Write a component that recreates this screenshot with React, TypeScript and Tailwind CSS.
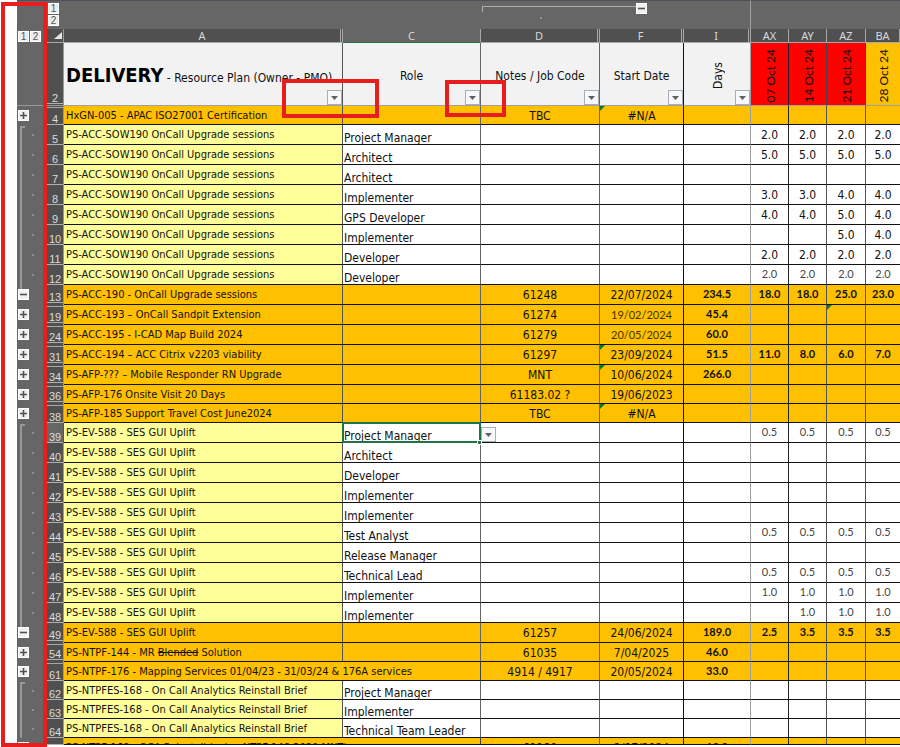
import React from "react";

type Outline = "plus" | "minus" | "first" | "mid" | "cut";
type Row = {
  n: string;
  level: Outline;
  kind: "sum" | "item";
  name: React.ReactNode;
  role?: string;
  code?: string;
  date?: string;
  lightDate?: boolean;
  days?: string;
  weeks?: string[];
  light?: boolean;
  flag?: "date" | "az";
  h?: "short" | "cut";
  gapAfter?: boolean;
  gapBefore?: boolean;
  wide?: boolean;
  selected?: boolean;
};

const SOW = "PS-ACC-SOW190 OnCall Upgrade sessions";
const EV = "PS-EV-588 - SES GUI Uplift";
const BRIEF = "PS-NTPFES-168 - On Call Analytics Reinstall Brief";

const rows: Row[] = [
  { n: "4", level: "plus", kind: "sum", name: "HxGN-005 - APAC ISO27001 Certification", code: "TBC", date: "#N/A", flag: "date", h: "short", gapBefore: true },
  { n: "5", level: "first", kind: "item", name: SOW, role: "Project Manager", weeks: ["2.0", "2.0", "2.0", "2.0"] },
  { n: "6", level: "mid", kind: "item", name: SOW, role: "Architect", weeks: ["5.0", "5.0", "5.0", "5.0"] },
  { n: "7", level: "mid", kind: "item", name: SOW, role: "Architect" },
  { n: "8", level: "mid", kind: "item", name: SOW, role: "Implementer", weeks: ["3.0", "3.0", "4.0", "4.0"] },
  { n: "9", level: "mid", kind: "item", name: SOW, role: "GPS Developer", weeks: ["4.0", "4.0", "5.0", "4.0"] },
  { n: "10", level: "mid", kind: "item", name: SOW, role: "Implementer", weeks: ["", "", "5.0", "4.0"] },
  { n: "11", level: "mid", kind: "item", name: SOW, role: "Developer", weeks: ["2.0", "2.0", "2.0", "2.0"] },
  { n: "12", level: "mid", kind: "item", name: SOW, role: "Developer", weeks: ["2.0", "2.0", "2.0", "2.0"], light: true },
  { n: "13", level: "minus", kind: "sum", name: "PS-ACC-190 - OnCall Upgrade sessions", code: "61248", date: "22/07/2024", days: "234.5", weeks: ["18.0", "18.0", "25.0", "23.0"], gapAfter: true },
  { n: "19", level: "plus", kind: "sum", name: "PS-ACC-193 – OnCall Sandpit Extension", code: "61274", date: "19/02/2024", lightDate: true, days: "45.4", flag: "az", gapBefore: true, gapAfter: true },
  { n: "24", level: "plus", kind: "sum", name: "PS-ACC-195 - I-CAD Map Build 2024", code: "61279", date: "20/05/2024", lightDate: true, days: "60.0", gapBefore: true, gapAfter: true },
  { n: "31", level: "plus", kind: "sum", name: "PS-ACC-194 – ACC Citrix v2203 viability", code: "61297", date: "23/09/2024", days: "51.5", weeks: ["11.0", "8.0", "6.0", "7.0"], flag: "date", gapBefore: true, gapAfter: true },
  { n: "34", level: "plus", kind: "sum", name: "PS-AFP-??? – Mobile Responder RN Upgrade", code: "MNT", date: "10/06/2024", days: "266.0", flag: "date", gapBefore: true, gapAfter: true },
  { n: "36", level: "plus", kind: "sum", name: "PS-AFP-176 Onsite Visit 20 Days", code: "61183.02 ?", date: "19/06/2023", h: "short", gapBefore: true, gapAfter: true },
  { n: "38", level: "plus", kind: "sum", name: "PS-AFP-185 Support Travel Cost June2024", code: "TBC", date: "#N/A", flag: "date", h: "short", gapBefore: true },
  { n: "39", level: "first", kind: "item", name: EV, role: "Project Manager", weeks: ["0.5", "0.5", "0.5", "0.5"], light: true, selected: true },
  { n: "40", level: "mid", kind: "item", name: EV, role: "Architect" },
  { n: "41", level: "mid", kind: "item", name: EV, role: "Developer" },
  { n: "42", level: "mid", kind: "item", name: EV, role: "Implementer" },
  { n: "43", level: "mid", kind: "item", name: EV, role: "Implementer" },
  { n: "44", level: "mid", kind: "item", name: EV, role: "Test Analyst", weeks: ["0.5", "0.5", "0.5", "0.5"], light: true },
  { n: "45", level: "mid", kind: "item", name: EV, role: "Release Manager" },
  { n: "46", level: "mid", kind: "item", name: EV, role: "Technical Lead", weeks: ["0.5", "0.5", "0.5", "0.5"], light: true },
  { n: "47", level: "mid", kind: "item", name: EV, role: "Implementer", weeks: ["1.0", "1.0", "1.0", "1.0"], light: true },
  { n: "48", level: "mid", kind: "item", name: EV, role: "Implementer", weeks: ["", "1.0", "1.0", "1.0"], light: true },
  { n: "49", level: "minus", kind: "sum", name: EV, code: "61257", date: "24/06/2024", days: "189.0", weeks: ["2.5", "3.5", "3.5", "3.5"], gapAfter: true },
  { n: "54", level: "plus", kind: "sum", name: <>PS-NTPF-144 - MR <s>Blended</s> Solution</>, code: "61035", date: "7/04/2025", days: "46.0", h: "short", gapBefore: true, gapAfter: true },
  { n: "61", level: "plus", kind: "sum", name: "PS-NTPF-176 - Mapping Services 01/04/23 - 31/03/24 & 176A services", code: "4914 / 4917", date: "20/05/2024", days: "33.0", h: "short", gapBefore: true, wide: true },
  { n: "62", level: "first", kind: "item", name: BRIEF, role: "Project Manager", h: "short" },
  { n: "63", level: "mid", kind: "item", name: BRIEF, role: "Implementer", h: "short" },
  { n: "64", level: "mid", kind: "item", name: BRIEF, role: "Technical Team Leader", h: "short" },
  { n: "", level: "cut", kind: "sum", name: "PS-NTPF-168 - OCA Reinstall (using NTPF 148 2020 MNT)", code: "61180", date: "2/07/2024", days: "13.0", h: "cut", wide: true },
];

const tahoma = "font-['DejaVu_Sans_Condensed','DejaVu_Sans',sans-serif]";
const gothic = "font-['Lato',sans-serif]";
const weekLines = ["border-r border-r-[#222]", "border-r border-r-[#555]", "border-r border-r-[#555]", "border-r-0"];

function Toggle({ kind }: { kind: "plus" | "minus" }) {
  return (
    <button
      aria-label={kind === "plus" ? "Expand group" : "Collapse group"}
      className="block h-[11px] w-[11px] shrink-0 border border-white bg-[#f0f0f0]"
    >
      <svg viewBox="0 0 9 9" className="block h-[9px] w-[9px]" aria-hidden="true">
        <path d={kind === "plus" ? "M1 4.5h7M4.5 1v7" : "M1 4.5h7"} stroke="#505050" strokeWidth="1.6" />
      </svg>
    </button>
  );
}

function LevelButton({ n }: { n: number }) {
  return (
    <button className="block h-[11px] w-[11px] shrink-0 border border-white bg-[#ececec] text-center font-['Liberation_Sans',Arial,sans-serif] text-[10px] leading-[9px] text-[#555]">
      {n}
    </button>
  );
}

function DropButton({ label, className }: { label: string; className: string }) {
  return (
    <button
      aria-label={label}
      className={"absolute flex h-[15px] w-[15px] items-center justify-center border border-[#a9afb8] bg-[#f7f8fa] " + className}
    >
      <svg viewBox="0 0 7 4" className="h-[4px] w-[7px]" aria-hidden="true">
        <path d="M0 0h7L3.5 4z" fill="#606060" />
      </svg>
    </button>
  );
}

function Flag() {
  return (
    <svg viewBox="0 0 5 5" className="absolute left-0 top-0 h-[5px] w-[5px]" aria-hidden="true">
      <path d="M0 0h5L0 5z" fill="#0a7d1a" />
    </svg>
  );
}

function OutlineCell({ level }: { level: Outline }) {
  if (level === "plus" || level === "minus")
    return (
      <div className="flex flex-col pl-px">
        <div className={"ml-[2px] h-[4px] w-[2px] " + (level === "minus" ? "bg-[#989898]" : "")} />
        <Toggle kind={level} />
      </div>
    );
  if (level === "cut")
    return (
      <div className="h-[7px] overflow-hidden pl-px pt-[4px]">
        <Toggle kind="minus" />
      </div>
    );
  return (
    <div className="flex h-full items-stretch">
      <div className={"ml-[3px] w-[5px] border-l-2 border-[#989898] " + (level === "first" ? "mt-px border-t-2" : "")} />
      <div className="ml-[7px] h-[2px] w-[2px] self-center bg-[#8e8e8e]" />
    </div>
  );
}

function SheetRow({ r }: { r: Row }) {
  const inner = r.h === "cut" ? "h-[6px]" : r.h === "short" ? "h-[18px]" : "h-[19px]";
  const outer = r.h === "cut" ? "h-[7px]" : r.h === "short" ? "h-[19px]" : "h-[20px]";
  const sum = r.kind === "sum";
  const fill = sum ? "bg-[#ffc000]" : "bg-white";
  const base = "border-b border-b-[#111] p-0 ";
  const td = base + "border-r ";
  const box = inner + " overflow-hidden whitespace-nowrap ";
  return (
    <tr className={outer}>
      <td className="bg-[#666] p-0">
        <div className={outer}><OutlineCell level={r.level} /></div>
      </td>
      <th scope="row" className={"border-r p-0 font-normal " + (r.selected ? "border-r-[#217346] bg-[#666]" : "border-r-[#999] bg-[#505050]")}>
        <div className={"flex flex-col overflow-hidden " + outer}>
          {r.gapBefore && <div className="mt-px h-px shrink-0 bg-[#a8a8a8]" />}
          <div className="flex min-h-0 flex-1 items-end justify-center overflow-hidden">
            <span className="font-['Liberation_Sans',Arial,sans-serif] text-[11px] leading-[10px] text-[#dcdcdc]">{r.n}</span>
          </div>
          <div className={"h-px shrink-0 bg-[#b0b0b0] " + (r.gapAfter ? "mb-[2px]" : "")} />
        </div>
      </th>
      <td colSpan={r.wide ? 2 : 1} className={td + (r.wide ? "border-r-[#444] " : "border-r-[#555] ") + (sum ? "bg-[#ffc000]" : "bg-[#ffff99]")}>
        <div className={box + "pl-[2px] leading-[20px]"}>{r.name}</div>
      </td>
      {!r.wide && (
        <td className={td + "relative border-r-[#666] " + fill}>
          <div className={box + "flex items-end pl-px text-[12px] leading-[12px]"}>
            <span>{r.role}</span>
          </div>
          {r.selected && (
            <>
              <div className="pointer-events-none absolute -inset-x-px -bottom-px -top-px border-2 border-[#217346]" />
              <div className="absolute -bottom-[3px] -right-[2px] z-10 h-[5px] w-[5px] border border-white bg-[#217346]" />
              <DropButton label="Choose role" className="-right-[16px] bottom-0" />
            </>
          )}
        </td>
      )}
      <td className={td + "border-r-[#666] text-center " + fill}>
        <div className={box + "text-[12px] leading-[20px]"}>{r.code}</div>
      </td>
      <td className={td + "relative border-r-[#111] text-center " + fill}>
        {r.flag === "date" && <Flag />}
        <div className={box + "leading-[20px] " + (r.lightDate ? gothic + " text-[#443300]" : "text-[12px]")}>{r.date}</div>
      </td>
      <td className={td + "border-r-[#a0a0a0] text-center font-bold " + fill}>
        <div className={box + "leading-[18px] " + gothic}>{r.days}</div>
      </td>
      {weekLines.map((line, i) => (
        <td key={i} className={base + "relative text-center " + line + " " + fill}>
          {r.flag === "az" && i === 2 && <Flag />}
          <div className={box + (sum ? gothic + " font-bold leading-[18px]" : r.light ? gothic + " leading-[18px] text-[#444]" : "text-[12px] leading-[20px]")}>
            {r.weeks?.[i]}
          </div>
        </td>
      ))}
    </tr>
  );
}

const letters: { l: string; twin?: boolean }[] = [
  { l: "A", twin: true }, { l: "C" }, { l: "D", twin: true }, { l: "F", twin: true }, { l: "I", twin: true },
  { l: "AX" }, { l: "AY" }, { l: "AZ" }, { l: "BA" },
];

const weekHeads = [
  { d: "07 Oct 24", c: "bg-[#ff0000] border-r border-r-[#222]" },
  { d: "14 Oct 24", c: "bg-[#ff0000] border-r border-r-[#444]" },
  { d: "21 Oct 24", c: "bg-[#ff0000] border-r border-r-[#444]" },
  { d: "28 Oct 24", c: "bg-[#ffc000]" },
];

export default function App() {
  const head = "relative border-b border-r border-b-[#a0a0a0] bg-[#f2f2f2] p-0 pt-[3px] text-[12px] leading-[16px] font-normal ";
  return (
    <main className={"relative overflow-hidden bg-white pb-[2px] pl-[17px] text-[11px] text-[#111] " + tahoma}>
      <table className="w-full table-fixed border-separate border-spacing-0">
        <colgroup>
          <col className="w-[30px]" />
          <col className="w-[17px]" />
          <col />
          <col className="w-[138px]" />
          <col className="w-[119px]" />
          <col className="w-[84px]" />
          <col className="w-[67px]" />
          <col className="w-[38px]" />
          <col className="w-[38px]" />
          <col className="w-[39px]" />
          <col className="w-[34px]" />
        </colgroup>
        <thead>
          <tr className="h-[29px] bg-[#666]">
            <td className="border-t border-[#50505a] p-0" />
            <td className="border-t border-[#50505a] p-0 align-top">
              <div className="flex flex-col gap-px pl-px pt-[2px]">
                <LevelButton n={1} />
                <LevelButton n={2} />
              </div>
            </td>
            <td colSpan={2} className="border-t border-[#50505a] p-0" />
            <td className="border-t border-[#50505a] p-0 align-top">
              <div className="ml-px mt-[5px] flex h-[14px] flex-col items-center">
                <div className="h-[6px] w-full shrink-0 border-l border-t border-[#b0b0b0]" />
                <div className="mt-[5px] h-[2px] w-[2px] shrink-0 bg-[#8e8e8e]" />
              </div>
            </td>
            <td className="border-t border-[#50505a] p-0 align-top">
              <div className="mt-[2px] flex">
                <div className="mt-[3px] h-px w-[36px] bg-[#b0b0b0]" />
                <Toggle kind="minus" />
              </div>
            </td>
            <td className="border-r border-t border-r-[#a0a0a0] border-t-[#50505a] p-0" />
            <td colSpan={4} className="border-t border-[#50505a] p-0" />
          </tr>
          <tr className="h-[14px] text-[#d8d8d8]">
            <td className="bg-[#666] p-0">
              <div className="flex gap-px pl-px">
                <LevelButton n={1} />
                <LevelButton n={2} />
              </div>
            </td>
            <td className="border-b border-r border-b-[#a8a8a8] border-r-[#999] bg-[#505050] p-0">
              <svg viewBox="0 0 8 7" className="ml-[7px] block h-[7px] w-[8px]" aria-hidden="true">
                <path d="M8 0v7H0z" fill="#e6e6e6" />
              </svg>
            </td>
            {letters.map(({ l, twin }) => (
              <th
                key={l}
                scope="col"
                className={
                  "border-b border-r border-r-[#a8a8a8] p-0 text-center font-normal " +
                  (l === "C" ? "border-b-[#217346] bg-[#666]" : "border-b-[#a8a8a8] bg-[#505050]")
                }
              >
                <div className={"h-[13px] font-['Noto_Sans',sans-serif] leading-[13px] " + (twin ? "mr-px border-r border-[#a8a8a8]" : "")}>{l}</div>
              </th>
            ))}
          </tr>
          <tr className="h-[63px]">
            <td className="border-b border-[#999] bg-[#666] p-0" />
            <th scope="row" className="border-b border-r border-[#999] bg-[#505050] p-0 align-bottom font-normal">
              <div className="mb-px border-b border-[#b0b0b0] text-center font-['Liberation_Sans',Arial,sans-serif] leading-[10px] text-[#dcdcdc]">2</div>
            </th>
            <th className={head + "border-r-[#555] text-left"}>
              <div className="whitespace-nowrap pl-[2px]">
                <span className="text-[20px] font-bold leading-[20px] text-black">DELIVERY</span> - Resource Plan (Owner - PMO)
              </div>
              <DropButton label="Filter column A" className="bottom-0 right-0" />
              <div className="pointer-events-none absolute -bottom-[13px] -right-[37px] z-20 h-[39px] w-[97px] border-4 border-[#e81e1e]" />
            </th>
            <th className={head + "border-r-[#666]"}>
              Role
              <DropButton label="Filter column C" className="bottom-0 right-0" />
              <div className="pointer-events-none absolute -bottom-[12px] -right-[26px] z-20 h-[37px] w-[61px] border-4 border-[#e81e1e]" />
            </th>
            <th className={head + "border-r-[#666]"}>
              Notes / Job Code
              <DropButton label="Filter column D" className="bottom-0 right-0" />
            </th>
            <th className={head + "border-r-[#111]"}>
              Start Date
              <DropButton label="Filter column F" className="bottom-0 right-0" />
            </th>
            <th className={head + "border-r-[#a0a0a0]"}>
              <div className="flex justify-center pl-[2px]">
                <span className="rotate-180 leading-[16px] [writing-mode:vertical-rl]">Days</span>
              </div>
              <DropButton label="Filter column I" className="bottom-0 right-0" />
            </th>
            {weekHeads.map((w) => (
              <th key={w.d} className={"border-b border-b-[#a0a0a0] p-0 align-bottom font-normal " + w.c}>
                <div className="flex justify-center pb-[2px] pl-[2px]">
                  <span className={"rotate-180 whitespace-nowrap text-[12px] leading-[16px] [writing-mode:vertical-rl] " + gothic}>{w.d}</span>
                </div>
              </th>
            ))}
          </tr>
        </thead>
        <tbody>
          {rows.map((r, i) => (
            <SheetRow key={i} r={r} />
          ))}
        </tbody>
      </table>
      <div className="pointer-events-none absolute bottom-0 left-px top-[2px] z-20 w-[46px] border-4 border-[#e81e1e]" />
    </main>
  );
}
